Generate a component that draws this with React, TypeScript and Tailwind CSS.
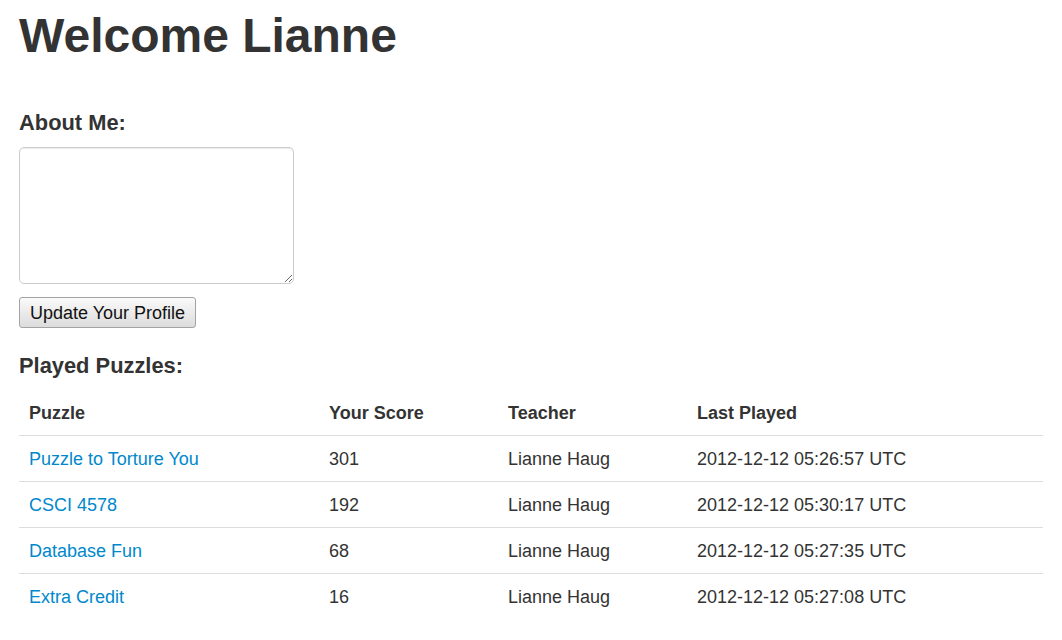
const puzzles = [
  { name: 'Puzzle to Torture You', score: 301, teacher: 'Lianne Haug', played: '2012-12-12 05:26:57 UTC' },
  { name: 'CSCI 4578', score: 192, teacher: 'Lianne Haug', played: '2012-12-12 05:30:17 UTC' },
  { name: 'Database Fun', score: 68, teacher: 'Lianne Haug', played: '2012-12-12 05:27:35 UTC' },
  { name: 'Extra Credit', score: 16, teacher: 'Lianne Haug', played: '2012-12-12 05:27:08 UTC' },
];

export default function App() {
  return (
    <div className="min-h-screen bg-white px-[19px] text-[#333] font-['Liberation_Sans',Arial,sans-serif]">
      {/* Header */}
      <h1 className="pt-[11px] text-[48px] font-bold leading-[50px]">Welcome Lianne</h1>

      {/* Profile form */}
      <form className="mt-[49px]" onSubmit={(e) => e.preventDefault()}>
        <h4 className="text-[21.875px] font-bold leading-[25px]">About Me:</h4>
        <textarea
          className="mt-[12px] block h-[137px] w-[275px] rounded-[5px] border border-[#ccc] bg-white p-[5px] text-[18px] shadow-[inset_0_1px_1px_rgba(0,0,0,0.075)] outline-none"
        />
        <button
          type="submit"
          className="mt-[13px] block h-[31px] rounded-[3px] border border-[#a3a3a3] bg-gradient-to-b from-[#fafafa] to-[#dcdcdc] px-[10px] text-[18px] leading-[20px] text-[#111]"
        >
          Update Your Profile
        </button>
      </form>

      {/* Played puzzles */}
      <h4 className="mt-[25px] text-[21.875px] font-bold leading-[25px]">Played Puzzles:</h4>
      <table className="mt-[12px] w-[1024px] table-fixed border-collapse text-[18px] leading-[25px]">
        <colgroup>
          <col className="w-[300px]" />
          <col className="w-[179px]" />
          <col className="w-[189px]" />
          <col className="w-[356px]" />
        </colgroup>
        <thead>
          <tr>
            <th className="px-[10px] pt-[11px] pb-[9px] text-left font-bold">Puzzle</th>
            <th className="px-[10px] pt-[11px] pb-[9px] text-left font-bold">Your Score</th>
            <th className="px-[10px] pt-[11px] pb-[9px] text-left font-bold">Teacher</th>
            <th className="px-[10px] pt-[11px] pb-[9px] text-left font-bold">Last Played</th>
          </tr>
        </thead>
        <tbody>
          {puzzles.map((p) => (
            <tr key={p.name} className="border-t border-[#ddd]">
              <td className="px-[10px] pt-[11px] pb-[9px]">
                <a href="#" className="text-[#0088cc]">{p.name}</a>
              </td>
              <td className="px-[10px] pt-[11px] pb-[9px]">{p.score}</td>
              <td className="px-[10px] pt-[11px] pb-[9px]">{p.teacher}</td>
              <td className="px-[10px] pt-[11px] pb-[9px]">{p.played}</td>
            </tr>
          ))}
        </tbody>
      </table>
    </div>
  );
}
